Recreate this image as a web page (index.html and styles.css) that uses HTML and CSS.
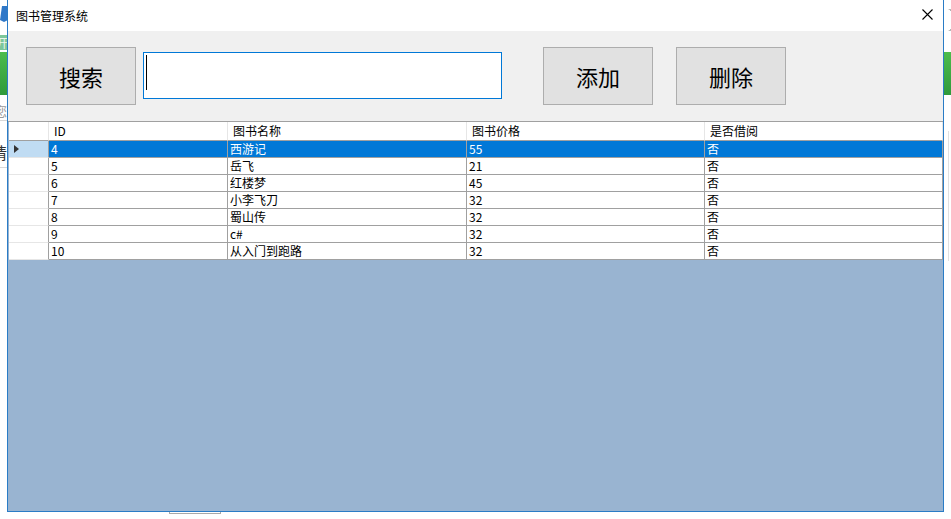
FILE: index.html
```html
<!DOCTYPE html>
<html lang="zh-CN">
<head>
  <meta charset="UTF-8">
  <title>图书管理系统</title>
  <link rel="stylesheet" href="styles.css">
</head>
<body>
  <div class="desktop">
    <!-- bits of the window behind -->
    <div class="backdrop">
      <svg class="bg-logo" width="8" height="34" viewBox="0 0 8 34"><path d="M2 6 L8 6 L8 20 L4 22 L0 20 Z" fill="#2f78c8"/></svg>
      <span class="bg-tag">开</span>
      <span class="bg-bar"></span>
      <span class="bg-bar bg-bar-right"></span>
      <span class="bg-hint">您</span>
      <span class="bg-line bg-line-1"></span>
      <span class="bg-please">请</span>
      <span class="bg-line bg-line-2"></span>
      <span class="bg-shadow"></span>
      <span class="bg-vline"></span>
      <span class="bg-tab"></span>
    </div>

    <div class="window">
      <div class="titlebar">
        <span class="title">图书管理系统</span>
        <svg class="close" width="11" height="11" viewBox="0 0 11 11">
          <path d="M0.5 0.5 L10.5 10.5 M10.5 0.5 L0.5 10.5" stroke="#000" stroke-width="1.1" fill="none"/>
        </svg>
      </div>

      <div class="client">
        <div class="toolbar">
          <button class="btn">搜索</button>
          <div class="search-box"><span class="caret"></span></div>
          <button class="btn btn-add">添加</button>
          <button class="btn btn-del">删除</button>
        </div>

        <div class="grid-area">
          <div class="grid">
            <div class="hcell hcorner"></div>
            <div class="hcell">ID</div>
            <div class="hcell">图书名称</div>
            <div class="hcell">图书价格</div>
            <div class="hcell">是否借阅</div>

            <div class="rhead current"><span class="arrow"></span></div>
            <div class="cell sel">4</div>
            <div class="cell sel">西游记</div>
            <div class="cell sel">55</div>
            <div class="cell sel">否</div>

            <div class="rhead"></div>
            <div class="cell">5</div>
            <div class="cell">岳飞</div>
            <div class="cell">21</div>
            <div class="cell">否</div>

            <div class="rhead"></div>
            <div class="cell">6</div>
            <div class="cell">红楼梦</div>
            <div class="cell">45</div>
            <div class="cell">否</div>

            <div class="rhead"></div>
            <div class="cell">7</div>
            <div class="cell">小李飞刀</div>
            <div class="cell">32</div>
            <div class="cell">否</div>

            <div class="rhead"></div>
            <div class="cell">8</div>
            <div class="cell">蜀山传</div>
            <div class="cell">32</div>
            <div class="cell">否</div>

            <div class="rhead"></div>
            <div class="cell">9</div>
            <div class="cell">c#</div>
            <div class="cell">32</div>
            <div class="cell">否</div>

            <div class="rhead"></div>
            <div class="cell">10</div>
            <div class="cell">从入门到跑路</div>
            <div class="cell">32</div>
            <div class="cell">否</div>
          </div>
        </div>
      </div>
    </div>
  </div>
</body>
</html>
```

FILE: styles.css
```css
/* General */
* {
  box-sizing: border-box;
}

body {
  margin: 0;
  background: #fff;
  font-family: "Noto Sans CJK SC", "Noto Sans", sans-serif;
  color: #000;
  overflow: hidden;
}

.desktop {
  position: relative;
  width: 951px;
  height: 519px;
  overflow: hidden;
}

/* Window behind the form */
.backdrop span,
.backdrop svg {
  position: absolute;
}

.bg-logo {
  left: 0;
  top: 0;
}

.bg-tag {
  left: -4px;
  top: 35px;
  width: 14px;
  height: 15px;
  background: #7cc79a;
  color: #e8f6ec;
  font-size: 12px;
  line-height: 15px;
}

.bg-bar {
  left: 0;
  top: 52px;
  width: 10px;
  height: 43px;
  background: linear-gradient(#4cbc4c, #2f9a3b);
}

.bg-bar-right {
  left: 944px;
}

.bg-hint {
  left: -6px;
  top: 101px;
  font-size: 13px;
  color: #9a9a9a;
}

.bg-line {
  left: 0;
  width: 10px;
  height: 1px;
  background: #d8d8d8;
}

.bg-line-1 {
  top: 120px;
}

.bg-line-2 {
  top: 167px;
}

.bg-please {
  left: -9px;
  top: 140px;
  font-size: 16px;
  color: #333;
}

.bg-shadow {
  left: 946px;
  top: 9px;
  width: 8px;
  height: 22px;
  border-radius: 0 6px 6px 0;
  border-right: 2px solid #555;
}

.bg-vline {
  left: 948px;
  top: 131px;
  width: 1px;
  height: 130px;
  background: #e0e0e0;
}

.bg-tab {
  left: 169px;
  top: 505px;
  width: 52px;
  height: 9px;
  border: 1px solid #a8a8a8;
  background: #fff;
}

/* Form window */
.window {
  position: absolute;
  left: 7px;
  top: -1px;
  width: 937px;
  height: 513px;
  border: 1px solid #2a7cc6;
  background: #f0f0f0;
  display: flex;
  flex-direction: column;
}

.titlebar {
  height: 31px;
  flex: none;
  background: #fff;
  display: flex;
  align-items: center;
  justify-content: space-between;
  padding: 0 10px 1px 8px;
}

.title {
  font-size: 12px;
}

.close {
  display: block;
  margin-top: -1px;
}

.client {
  flex: 1;
  display: flex;
  flex-direction: column;
}

/* Search / add / delete row */
.toolbar {
  height: 90px;
  flex: none;
  display: flex;
  align-items: flex-start;
  padding: 16px 0 0 18px;
}

.btn {
  width: 110px;
  height: 58px;
  border: 1px solid #adadad;
  background: #e1e1e1;
  font-family: inherit;
  font-size: 22px;
  color: #000;
  padding: 0;
}

.btn-add {
  margin-left: 41px;
}

.btn-del {
  margin-left: 23px;
}

.search-box {
  width: 359px;
  height: 47px;
  margin: 5px 0 0 7px;
  border: 1px solid #0078d7;
  background: #fff;
  padding: 2px 0 0 2px;
}

.caret {
  display: block;
  width: 1px;
  height: 35px;
  background: #000;
}

/* Data grid */
.grid-area {
  flex: 1;
  background: #99b4d1;
  border-top: 1px solid #a0a0a0;
  padding-left: 1px;
}

.grid {
  display: grid;
  grid-template-columns: 40px 179px 239px 238px 238px;
  grid-auto-rows: 17px;
  grid-template-rows: 19px;
  font-size: 12px;
}

.hcell {
  background: #fff;
  border-right: 1px solid #e6e6e6;
  border-bottom: 1px solid #a0a0a0;
  line-height: 18px;
  padding-left: 5px;
  white-space: nowrap;
}

.hcorner {
  border-right-color: #e6e6e6;
}

.rhead {
  background: #fff;
  border-right: 1px solid #a0a0a0;
  border-bottom: 1px solid #e6e6e6;
  display: flex;
  align-items: center;
  padding-left: 5px;
}

.rhead.current {
  background: #c0dcf3;
}

.arrow {
  width: 0;
  height: 0;
  border-left: 5px solid #333;
  border-top: 4.5px solid transparent;
  border-bottom: 4.5px solid transparent;
}

.cell {
  background: #fff;
  border-right: 1px solid #a0a0a0;
  border-bottom: 1px solid #a0a0a0;
  line-height: 16px;
  padding-left: 2px;
  white-space: nowrap;
}

.cell.sel {
  background: #0078d7;
  color: #fff;
}
```
